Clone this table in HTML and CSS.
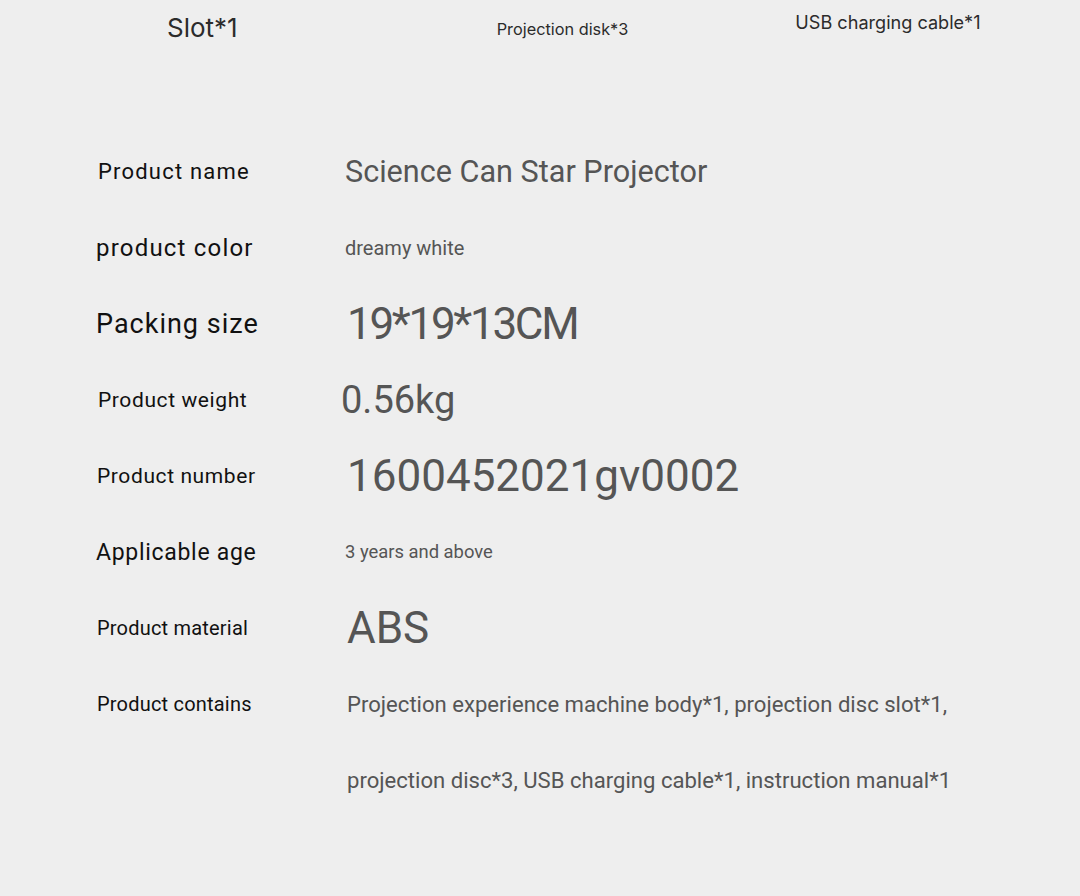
FILE: index.html
```html
<!DOCTYPE html>
<html lang="en">
<head>
<meta charset="utf-8">
<title>Science Can Star Projector</title>
<link rel="stylesheet" href="styles.css">
</head>
<body>
<div class="page">
  <div class="parts">
    <span class="part part-slot">Slot*1</span>
    <span class="part part-disk">Projection disk*3</span>
    <span class="part part-cable">USB charging cable*1</span>
  </div>
  <div class="specs">
    <div class="label l-name">Product name</div>
    <div class="value v-name">Science Can Star Projector</div>

    <div class="label l-color">product color</div>
    <div class="value v-small">dreamy white</div>

    <div class="label l-pack">Packing size</div>
    <div class="value v-big v-size">19*19*13CM</div>

    <div class="label l-weight">Product weight</div>
    <div class="value v-weight">0.56kg</div>

    <div class="label l-number">Product number</div>
    <div class="value v-big">1600452021gv0002</div>

    <div class="label l-age">Applicable age</div>
    <div class="value v-age">3 years and above</div>

    <div class="label l-material">Product material</div>
    <div class="value v-big">ABS</div>

    <div class="label l-contains">Product contains</div>
    <div class="value v-contains">Projection experience machine body*1, projection disc slot*1,<br>projection disc*3, USB charging cable*1, instruction manual*1</div>
  </div>
</div>
</body>
</html>
```

FILE: styles.css
```css
html, body {
  margin: 0;
  padding: 0;
  background: #eeeeee;
}

.page {
  width: 1080px;
  height: 896px;
  overflow: hidden;
  background: #eeeeee;
}

.parts {
  display: flex;
  align-items: flex-start;
  height: 134px;
  font-family: "Inter", "Roboto", sans-serif;
  color: #2b2b2b;
}

.part { white-space: nowrap; line-height: 1; }

.part-slot {
  margin-left: 167px;
  margin-top: 15px;
  font-size: 26px;
}

.part-disk {
  margin-left: 259px;
  margin-top: 21px;
  font-size: 16.3px;
}

.part-cable {
  margin-left: 167px;
  margin-top: 13px;
  font-size: 18.1px;
}

.specs {
  display: grid;
  grid-template-columns: 248px 1fr;
  grid-auto-rows: 76px;
  padding-left: 97px;
  align-items: center;
}

.label {
  font-family: "Roboto", "Liberation Sans", sans-serif;
  color: #111111;
  white-space: nowrap;
  line-height: 1;
}

.value {
  font-family: "Roboto", "Liberation Sans", sans-serif;
  color: #555555;
  white-space: nowrap;
  line-height: 1;
}

.l-name { font-size: 22px; letter-spacing: 1.2px; margin-left: 1px; }
.l-color { font-size: 24px; letter-spacing: 1.2px; margin-left: -1px; }
.l-pack { font-size: 27px; letter-spacing: 1px; margin-left: -1px; }
.l-weight { font-size: 21px; letter-spacing: 0.6px; margin-left: 1px; }
.l-number { font-size: 21px; letter-spacing: 0.6px; }
.l-age { font-size: 23px; letter-spacing: 0.7px; margin-left: -1px; }
.l-material { font-size: 20px; letter-spacing: 0.2px; }
.l-contains { font-size: 20px; letter-spacing: 0.2px; align-self: start; padding-top: 28px; }

.v-name { font-size: 30.6px; }
.v-small { font-size: 20px; }
.v-big { font-size: 44px; margin-left: 2px; }
.v-size { letter-spacing: -2.3px; }
.v-weight { font-size: 38px; margin-left: -4px; }
.v-age { font-size: 18.4px; }

.v-contains {
  grid-row: span 2;
  font-size: 22.1px;
  line-height: 76px;
  margin-left: 2px;
  align-self: start;
}
```
